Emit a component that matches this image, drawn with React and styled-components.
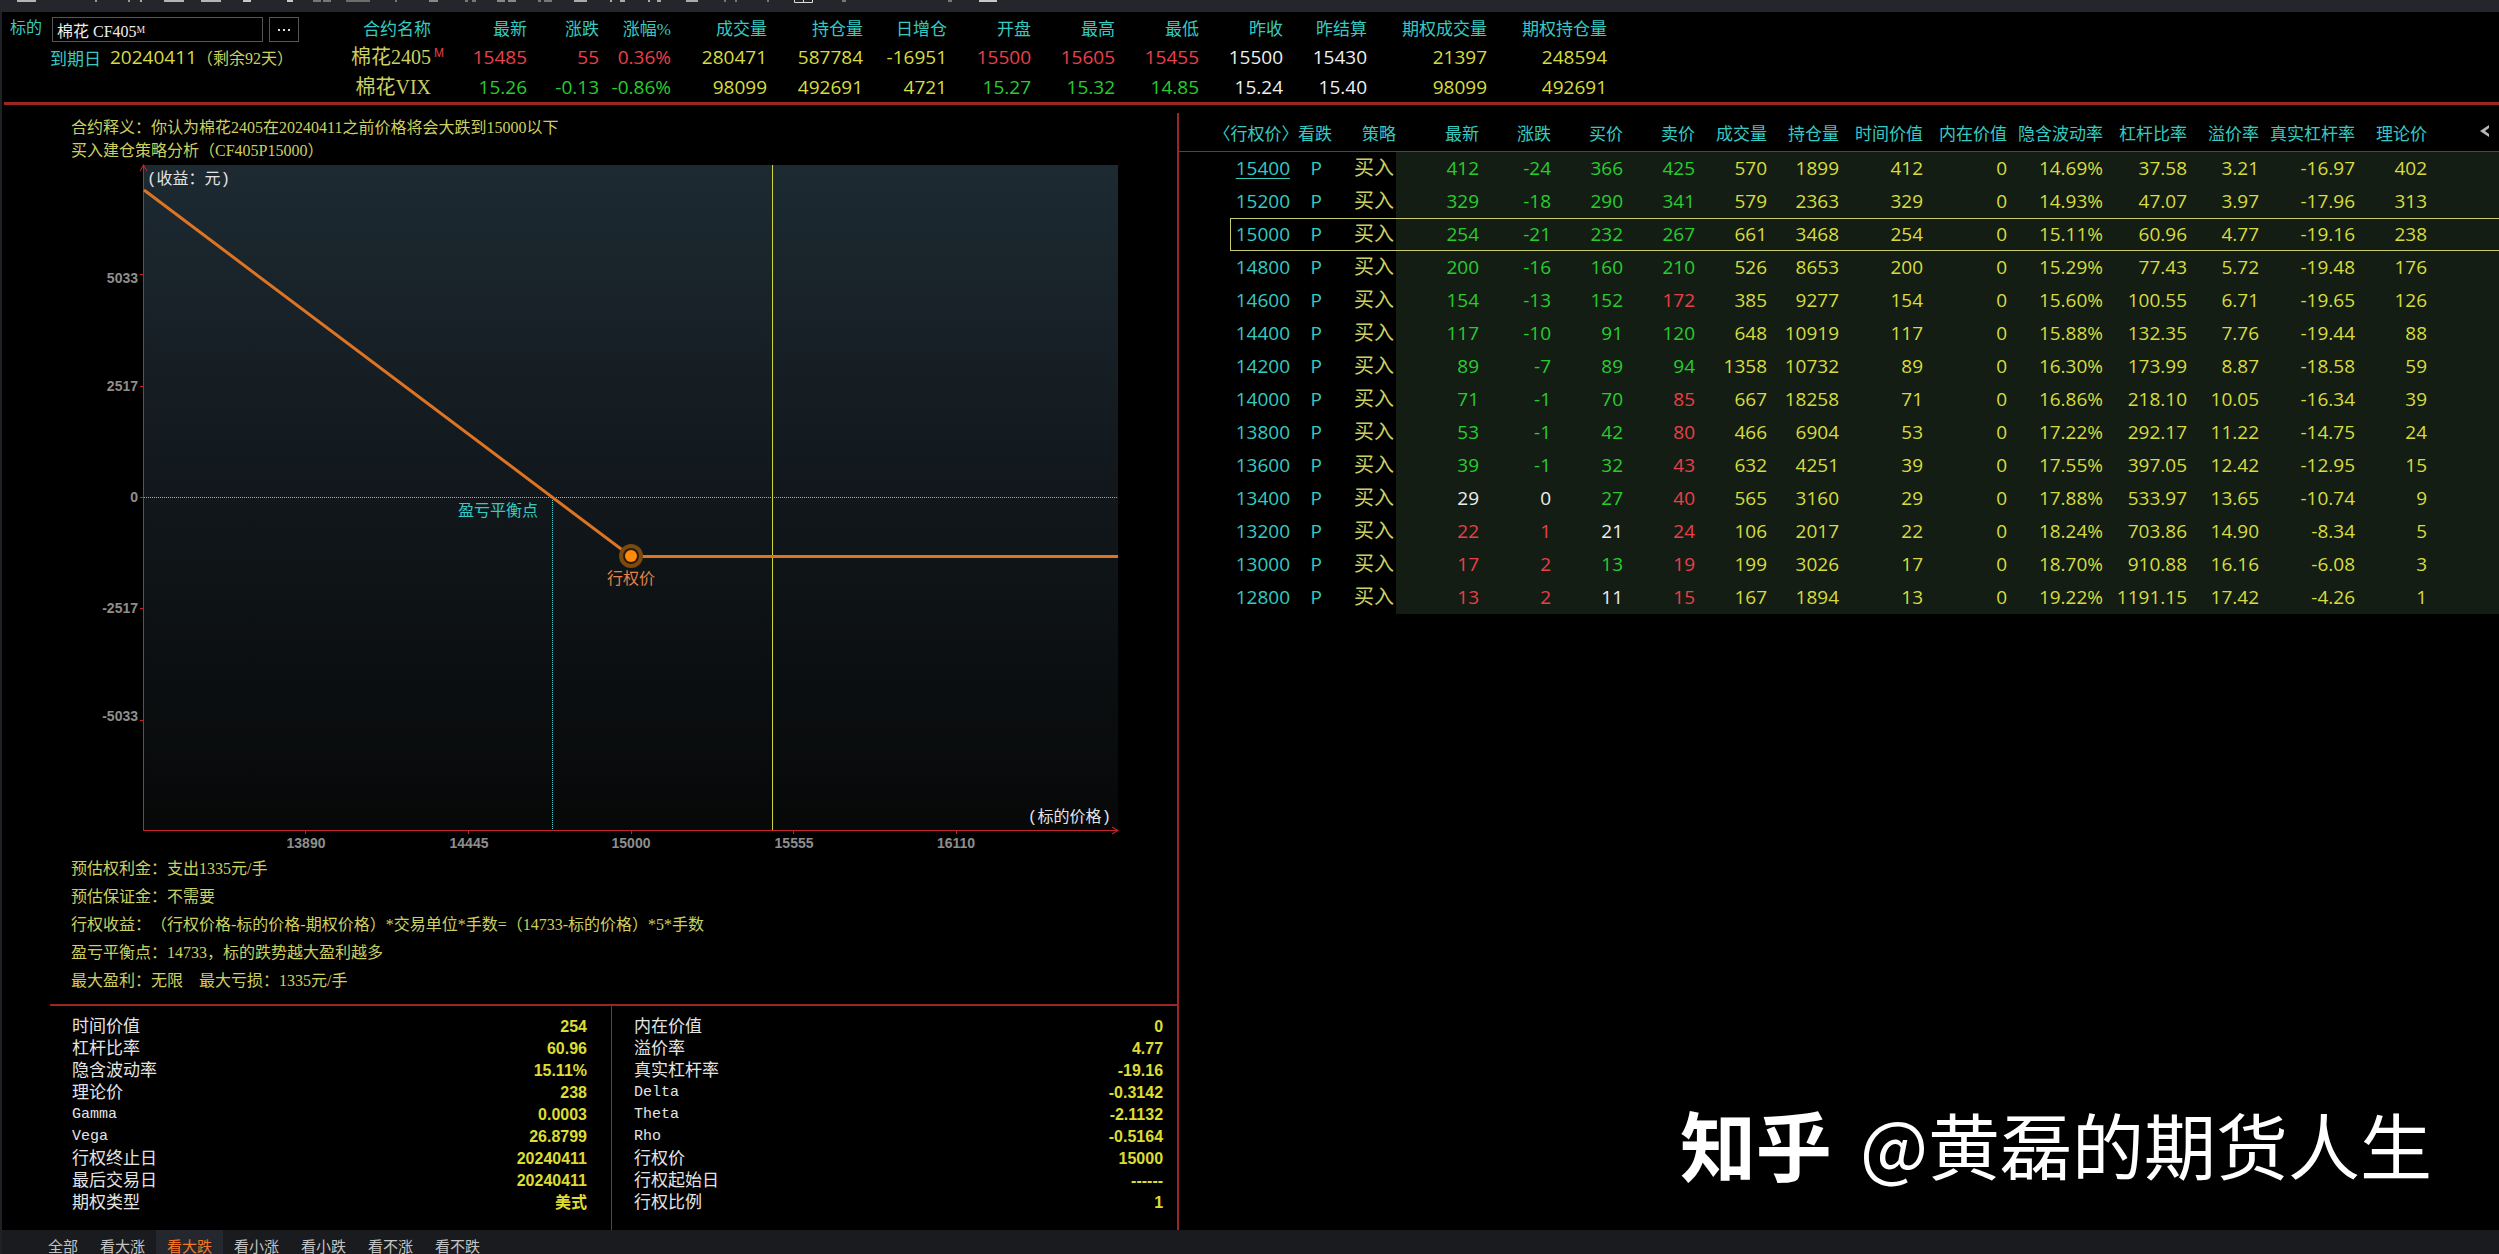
import { useState } from "react";
import styled, { createGlobalStyle } from "styled-components";

const SONG = `"Liberation Serif", "Noto Sans CJK SC", serif`;
const SANS = `"Open Sans", "Noto Sans", "Noto Sans CJK SC", sans-serif`;
const ARIAL = `"Liberation Sans", "Noto Sans CJK SC", sans-serif`;
const MONO = `"Liberation Mono", "Noto Sans CJK SC", monospace`;

const colors = {
  r: "#e8404a",
  g: "#28cc30",
  y: "#d6dc40",
  w: "#eeeeee",
  c: "#36cac2",
  note: "#ccd060",
};

// [x, width, color] of each toolbar glyph
const toolbarMarks = [
  [17, 19, "#b4b4b4"], [95, 2, "#999"], [128, 2, "#999"], [140, 2, "#aaa"],
  [164, 20, "#b4b4b4"], [201, 20, "#b4b4b4"], [243, 8, "#c8c8c8"], [287, 6, "#c8c8c8"],
  [313, 8, "#777"], [323, 8, "#777"], [346, 24, "#6c6c6c"], [395, 2, "#777"],
  [429, 9, "#888"], [465, 3, "#777"], [472, 4, "#777"], [497, 8, "#888"],
  [508, 8, "#888"], [538, 3, "#777"], [544, 8, "#777"], [574, 13, "#aaa"],
  [610, 2, "#aaa"], [620, 5, "#aaa"], [648, 2, "#aaa"], [657, 4, "#aaa"],
  [686, 12, "#aaa"], [724, 2, "#777"], [735, 2, "#777"], [767, 2, "#777"],
  [842, 4, "#777"], [948, 4, "#777"], [979, 18, "#c8c8c8"],
];

const quoteWidths = [101, 96, 72, 72, 96, 96, 84, 84, 84, 84, 84, 84, 120, 120];
const quoteHeads = [
  "合约名称", "最新", "涨跌", "涨幅%", "成交量", "持仓量", "日增仓",
  "开盘", "最高", "最低", "昨收", "昨结算", "期权成交量", "期权持仓量",
];
const quotes = [
  {
    name: "棉花2405",
    main: true,
    tones: "rrryyyrrrwwyy",
    cells: ["15485", "55", "0.36%", "280471", "587784", "-16951", "15500", "15605", "15455", "15500", "15430", "21397", "248594"],
  },
  {
    name: "棉花VIX",
    tones: "gggyyygggwwyy",
    cells: ["15.26", "-0.13", "-0.86%", "98099", "492691", "4721", "15.27", "15.32", "14.85", "15.24", "15.40", "98099", "492691"],
  },
];

const optionWidths = [51, 60, 42, 64, 83, 72, 72, 72, 72, 72, 84, 84, 96, 84, 72, 96, 72];
const optionHeads = [
  "看跌", "策略", "最新", "涨跌", "买价", "卖价", "成交量", "持仓量", "时间价值",
  "内在价值", "隐含波动率", "杠杆比率", "溢价率", "真实杠杆率", "理论价",
];
// strike, tones of the four prices, then the cells
const options = [
  ["15400", "gggg", "412 -24 366 425 570 1899 412 0 14.69% 37.58 3.21 -16.97 402"],
  ["15200", "gggg", "329 -18 290 341 579 2363 329 0 14.93% 47.07 3.97 -17.96 313"],
  ["15000", "gggg", "254 -21 232 267 661 3468 254 0 15.11% 60.96 4.77 -19.16 238"],
  ["14800", "gggg", "200 -16 160 210 526 8653 200 0 15.29% 77.43 5.72 -19.48 176"],
  ["14600", "gggr", "154 -13 152 172 385 9277 154 0 15.60% 100.55 6.71 -19.65 126"],
  ["14400", "gggg", "117 -10 91 120 648 10919 117 0 15.88% 132.35 7.76 -19.44 88"],
  ["14200", "gggg", "89 -7 89 94 1358 10732 89 0 16.30% 173.99 8.87 -18.58 59"],
  ["14000", "gggr", "71 -1 70 85 667 18258 71 0 16.86% 218.10 10.05 -16.34 39"],
  ["13800", "gggr", "53 -1 42 80 466 6904 53 0 17.22% 292.17 11.22 -14.75 24"],
  ["13600", "gggr", "39 -1 32 43 632 4251 39 0 17.55% 397.05 12.42 -12.95 15"],
  ["13400", "wwgr", "29 0 27 40 565 3160 29 0 17.88% 533.97 13.65 -10.74 9"],
  ["13200", "rrwr", "22 1 21 24 106 2017 22 0 18.24% 703.86 14.90 -8.34 5"],
  ["13000", "rrgr", "17 2 13 19 199 3026 17 0 18.70% 910.88 16.16 -6.08 3"],
  ["12800", "rrwr", "13 2 11 15 167 1894 13 0 19.22% 1191.15 17.42 -4.26 1"],
];

const notes = [
  "预估权利金：支出1335元/手",
  "预估保证金：不需要",
  "行权收益：（行权价格-标的价格-期权价格）*交易单位*手数=（14733-标的价格）*5*手数",
  "盈亏平衡点：14733，标的跌势越大盈利越多",
  "最大盈利：无限\u3000最大亏损：1335元/手",
];

const statsLeft = [
  ["时间价值", "254"],
  ["杠杆比率", "60.96"],
  ["隐含波动率", "15.11%"],
  ["理论价", "238"],
  ["Gamma", "0.0003"],
  ["Vega", "26.8799"],
  ["行权终止日", "20240411"],
  ["最后交易日", "20240411"],
  ["期权类型", "美式"],
];
const statsRight = [
  ["内在价值", "0"],
  ["溢价率", "4.77"],
  ["真实杠杆率", "-19.16"],
  ["Delta", "-0.3142"],
  ["Theta", "-2.1132"],
  ["Rho", "-0.5164"],
  ["行权价", "15000"],
  ["行权起始日", "------"],
  ["行权比例", "1"],
];

const tabs = ["全部", "看大涨", "看大跌", "看小涨", "看小跌", "看不涨", "看不跌"];

const Toolbar = () => (
  <ToolbarBox>
    <svg width="1010" height="4" aria-hidden="true">
      {toolbarMarks.map(([x, w, fill]) => (
        <rect key={x} x={x} y="0" width={w} height="2" fill={fill} />
      ))}
      <path d="M794.5 0V2.5H812.5V0M803.5 0V2" fill="none" stroke="#ddd" />
    </svg>
  </ToolbarBox>
);

const QuoteHeader = () => (
  <Header>
    <Query>
      <QueryRow>
        <QueryLabel htmlFor="underlying">标的</QueryLabel>
        <QueryInput id="underlying" defaultValue="棉花 CF405ᴹ" />
        <MoreButton aria-label="选择标的">
          <svg width="14" height="4" aria-hidden="true">
            <path d="M1 1h2v2H1zM6 1h2v2H6zM11 1h2v2h-2z" fill="#ddd" />
          </svg>
        </MoreButton>
      </QueryRow>
      <Expiry>
        <ExpiryLabel>到期日</ExpiryLabel>
        <ExpiryDate>20240411</ExpiryDate>
        <ExpiryLeft>（剩余92天）</ExpiryLeft>
      </Expiry>
    </Query>
    <QuoteTable>
      <colgroup>
        {quoteWidths.map((w, i) => <Col key={i} $w={w} />)}
      </colgroup>
      <thead>
        <tr>
          {quoteHeads.map((h) => <th key={h}>{h}</th>)}
        </tr>
      </thead>
      <tbody>
        {quotes.map((q) => (
          <tr key={q.name}>
            <QuoteName>
              {q.name}
              {q.main && <MainMark>M</MainMark>}
            </QuoteName>
            {q.cells.map((cell, i) => (
              <Num key={i} $tone={q.tones[i]}>{cell}</Num>
            ))}
          </tr>
        ))}
      </tbody>
    </QuoteTable>
  </Header>
);

const PayoffChart = () => (
  <Chart viewBox="2 162 1175 693" role="img" aria-label="到期收益">
    <defs>
      <linearGradient id="sky" x1="0" y1="0" x2="0" y2="1">
        <stop offset="0" stopColor="#1d2a32" />
        <stop offset="0.5" stopColor="#11171b" />
        <stop offset="1" stopColor="#070808" />
      </linearGradient>
    </defs>
    <rect x="144" y="165" width="974" height="665" fill="url(#sky)" />
    <path d="M144 497.5H1118M552.5 498V830" fill="none" stroke="#58d0d4" strokeDasharray="1 1" />
    <path d="M772.5 165V830" stroke="#d2d83c" />
    <path
      d="M143.5 165V830.5H1118M140 171l3.5-6 3.5 6M1112 827l6 3.5-6 3.5"
      fill="none"
      stroke="#c8222c"
    />
    <path
      d="M140 274.500h3M140 386.500h3M140 497.500h3M140 608.500h3M140 720.500h3M305.500 831v3M468.500 831v3M631.500 831v3M793.500 831v3M956.500 831v3"
      stroke="#c8222c"
    />
    <path d="M144 190L631 556.500H1118" fill="none" stroke="#dc7424" strokeWidth="3" />
    <circle cx="631" cy="556" r="12" fill="#7a4a10" />
    <circle cx="631" cy="556" r="8" fill="#2a1a08" />
    <circle cx="631" cy="556" r="6" fill="#ff8a0c" />
    {[["5033", 283], ["2517", 391], ["0", 502], ["-2517", 613], ["-5033", 721]].map(([t, y]) => (
      <AxisText key={t} x="138" y={y} textAnchor="end">{t}</AxisText>
    ))}
    {[["13890", 306], ["14445", 469], ["15000", 631], ["15555", 794], ["16110", 956]].map(([t, x]) => (
      <AxisText key={t} x={x} y="848" textAnchor="middle">{t}</AxisText>
    ))}
    <ChartText x="147" y="184" fill="#e4e4e4">(收益：元)</ChartText>
    <ChartText x="1111" y="822" textAnchor="end" fill="#e4e4e4">(标的价格)</ChartText>
    <ChartText x="458" y="516" fill={colors.c}>盈亏平衡点</ChartText>
    <ChartText x="631" y="584" textAnchor="middle" fill="#e2824a">行权价</ChartText>
  </Chart>
);

const Stats = ({ rows }) => (
  <StatList>
    {rows.map(([label, value]) => (
      <StatRow key={label}>
        <StatLabel $latin={/^[A-Z]/.test(label)}>{label}</StatLabel>
        <StatValue>{value}</StatValue>
      </StatRow>
    ))}
  </StatList>
);

const OptionChain = ({ selected, onSelect }) => (
  <OptionTable>
    <colgroup>
      {optionWidths.map((w, i) => <Col key={i} $w={w} />)}
      <col />
    </colgroup>
    <thead>
      <tr>
        <StrikeHead colSpan={2}>〈行权价〉</StrikeHead>
        {optionHeads.map((h) => <th key={h}>{h}</th>)}
        <th>
          <CollapseButton aria-label="收起">
            <svg width="10" height="12" viewBox="0 0 10 12" aria-hidden="true">
              <path d="M9 0L0 6l9 6V9L5 6l4-3z" fill="#b8b8b8" />
            </svg>
          </CollapseButton>
        </th>
      </tr>
    </thead>
    <tbody>
      {options.map(([strike, tones, line], n) => (
        <OptionRow key={strike} $on={strike === selected} onClick={() => onSelect(strike)}>
          <td />
          <Num $tone="c">
            {n === 0 ? <StrikeLink href="#15400">{strike}</StrikeLink> : strike}
          </Num>
          <TypeCell $tone="c">P</TypeCell>
          <td><BuyButton>买入</BuyButton></td>
          {line.split(" ").map((cell, i) => (
            <PriceCell key={i} $tone={tones[i] || "y"}>{cell}</PriceCell>
          ))}
          <PriceCell />
        </OptionRow>
      ))}
    </tbody>
  </OptionTable>
);

const App = () => {
  const [selected, setSelected] = useState("15000");
  const [tab, setTab] = useState("看大跌");

  return (
    <Page>
      <GlobalStyle />
      <Toolbar />
      <Main>
        <QuoteHeader />
        <Body>
          <Analysis>
            <Intro>
              <p>合约释义：你认为棉花2405在20240411之前价格将会大跌到15000以下</p>
              <p>买入建仓策略分析（CF405P15000）</p>
            </Intro>
            <PayoffChart />
            <Notes>
              {notes.map((n) => <li key={n}>{n}</li>)}
            </Notes>
            <StatsGrid>
              <Stats rows={statsLeft} />
              <Stats rows={statsRight} />
            </StatsGrid>
          </Analysis>
          <Chain>
            <OptionChain selected={selected} onSelect={setSelected} />
            <Watermark>
              <b>知乎</b>
              <span>@黄磊的期货人生</span>
            </Watermark>
          </Chain>
        </Body>
        <TabBar>
          {tabs.map((t) => (
            <Tab key={t} $on={t === tab} onClick={() => setTab(t)}>{t}</Tab>
          ))}
        </TabBar>
      </Main>
    </Page>
  );
};

export default App;

// Styles
const GlobalStyle = createGlobalStyle`
  * {
    box-sizing: border-box;
  }
  body {
    margin: 0;
    background: #000;
    overflow: hidden;
    text-spacing-trim: space-all;
  }
  p, ul, dl, dd {
    margin: 0;
    padding: 0;
  }
  button {
    padding: 0;
    border: 0;
    background: none;
    cursor: pointer;
  }
`;

const Page = styled.div`
  display: flex;
  flex-direction: column;
  height: 100vh;
  background: #000;
  color: ${colors.note};
  font-family: ${SONG};
  font-size: 16px;
`;

const ToolbarBox = styled.div`
  flex: none;
  height: 12px;
  background: #24262c;

  svg {
    display: block;
  }
`;

const Main = styled.div`
  flex: 1;
  min-height: 0;
  display: flex;
  flex-direction: column;
  border-left: 2px solid #1e2125;
`;

const Header = styled.header`
  display: flex;
  flex: none;
  margin-left: 2px;
  border-bottom: 3px solid #9c2622;
`;

const Query = styled.div`
  width: 326px;
  padding: 5px 0 0 6px;
`;

const QueryRow = styled.div`
  display: flex;
  align-items: flex-start;
`;

const QueryLabel = styled.label`
  width: 42px;
  color: ${colors.c};
  line-height: 22px;
`;

const QueryInput = styled.input`
  width: 211px;
  height: 25px;
  margin-right: 6px;
  padding: 0 4px;
  border: 1px solid #555;
  background: #000;
  color: ${colors.w};
  font: 16px ${SONG};
`;

const MoreButton = styled.button`
  display: flex;
  align-items: center;
  justify-content: center;
  width: 30px;
  height: 25px;
  && {
    border: 1px solid #555;
  }
`;

const Expiry = styled.div`
  display: flex;
  align-items: center;
  height: 30px;
  padding-left: 40px;
`;

const ExpiryLabel = styled.span`
  width: 60px;
  color: ${colors.c};
  font-size: 17px;
`;

const ExpiryDate = styled.span`
  color: ${colors.y};
  font: 19px ${SANS};
`;

const ExpiryLeft = styled.span`
  white-space: nowrap;
`;

const Col = styled.col`
  width: ${(p) => p.$w}px;
`;

const QuoteTable = styled.table`
  table-layout: fixed;
  width: 1277px;
  border-collapse: collapse;

  tr {
    height: 30px;
  }
  th {
    padding: 0;
    color: ${colors.c};
    font-size: 17px;
    font-weight: normal;
    text-align: right;
    white-space: nowrap;
  }
`;

const Num = styled.td`
  padding: 0;
  color: ${(p) => colors[p.$tone]};
  font-family: ${SANS};
  font-size: 19px;
  line-height: 24px;
  text-align: right;
`;

const QuoteName = styled.td`
  position: relative;
  padding: 0;
  font-size: 20px;
  line-height: 24px;
  text-align: right;
`;

const MainMark = styled.sup`
  position: absolute;
  top: 4px;
  left: 100%;
  margin-left: 3px;
  color: ${colors.r};
  font: 12px/14px ${ARIAL};
`;

const Body = styled.div`
  flex: 1;
  min-height: 0;
  display: grid;
  grid-template-columns: 8fr 9fr;
`;

const Analysis = styled.section`
  min-width: 0;
  padding-top: 11px;
`;

const Intro = styled.div`
  padding-left: 69px;
  line-height: 23px;
`;

const Chart = styled.svg`
  display: block;
  width: 100%;
`;

const AxisText = styled.text`
  fill: #8e8e8e;
  font: bold 14px ${ARIAL};
`;

const ChartText = styled.text`
  font: 16px ${MONO};
`;

const Notes = styled.ul`
  padding: 0 0 9px 69px;
  list-style: none;
  line-height: 28px;
`;

const StatsGrid = styled.div`
  display: grid;
  grid-template-columns: 112fr 113fr;
  height: 226px;
  margin-left: 48px;
  border-top: 2px solid #9c2622;
`;

const StatList = styled.dl`
  && {
    padding: 10px 14px 0 22px;
  }
  &&:first-child {
    padding-right: 24px;
  }
  && + & {
    border-left: 1px solid #9c2622;
  }
`;

const StatRow = styled.div`
  display: flex;
  justify-content: space-between;
  height: 22px;
  line-height: 22px;
`;

const StatLabel = styled.dt`
  color: #e4e4e4;
  font-family: ${(p) => (p.$latin ? MONO : SONG)};
  font-size: ${(p) => (p.$latin ? 15 : 17)}px;
`;

const StatValue = styled.dd`
  color: #dcdc32;
  font: bold 16px/22px ${ARIAL};
`;

const Chain = styled.section`
  position: relative;
  min-width: 0;
  margin-top: 8px;
  border-left: 2px solid #9c2622;
`;

const OptionTable = styled.table`
  table-layout: fixed;
  width: 100%;
  border-collapse: separate;
  border-spacing: 0;

  th {
    height: 39px;
    padding: 0;
    border-bottom: 1px solid #9c2622;
    color: ${colors.c};
    font-size: 17px;
    font-weight: normal;
    text-align: right;
    white-space: nowrap;
  }
  td {
    height: 33px;
    padding: 0 0 2px;
    text-align: right;
  }
`;

const StrikeHead = styled.th`
  font-feature-settings: "halt";
`;

const OptionRow = styled.tr`
  td:not(:first-child) {
    box-shadow: ${(p) => (p.$on ? "inset 0 1px #c8cc6c, inset 0 -1px #c8cc6c" : "none")};
  }
  td:nth-child(2) {
    border-left: 1px solid ${(p) => (p.$on ? "#c8cc6c" : "transparent")};
  }
`;

const TypeCell = styled(Num)`
  && {
    padding-right: 10px;
  }
`;

const PriceCell = styled(Num)`
  background: #131d13;
`;

const StrikeLink = styled.a`
  color: inherit;
  text-underline-offset: 3px;
`;

const BuyButton = styled.button`
  margin-right: 2px;
  color: ${colors.note};
  font: 20px/24px ${SONG};
`;

const CollapseButton = styled.button`
  width: 10px;
  height: 12px;
  margin-right: 9px;

  svg {
    display: block;
  }
`;

const Watermark = styled.div`
  position: absolute;
  right: 67px;
  bottom: 35px;
  display: flex;
  align-items: center;
  gap: 28px;
  color: #fff;
  font: 72px/104px "Noto Sans CJK SC", sans-serif;
  white-space: nowrap;

  b {
    font-size: 76px;
  }
`;

const TabBar = styled.nav`
  display: flex;
  flex: none;
  align-items: flex-start;
  height: 24px;
  padding-left: 35px;
  overflow: hidden;
  background: #1a1b1f;
`;

const Tab = styled.button`
  && {
    padding: 0 11px;
    background: ${(p) => (p.$on ? "#24282e" : "none")};
  }
  color: ${(p) => (p.$on ? "#f07828" : "#c4c4c4")};
  font: 15px/34px ${ARIAL};
`;
